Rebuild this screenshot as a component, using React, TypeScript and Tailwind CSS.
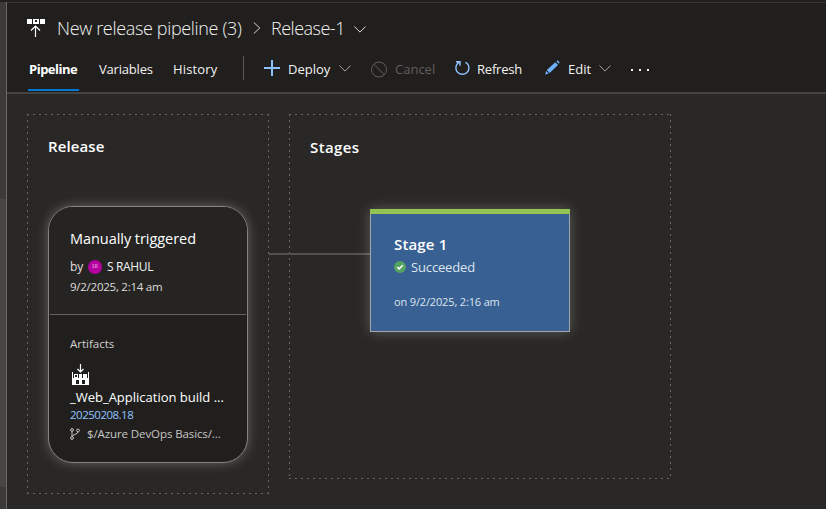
import React from "react";

const dashes =
  "[background:linear-gradient(90deg,#696765_2px,transparent_2px)_0_0/6px_1px_repeat-x,linear-gradient(90deg,#696765_2px,transparent_2px)_0_100%/6px_1px_repeat-x,linear-gradient(#696765_2px,transparent_2px)_0_0/1px_6px_repeat-y,linear-gradient(#696765_2px,transparent_2px)_100%_0/1px_6px_repeat-y]";

function ChevronDown({ className = "" }: { className?: string }) {
  return (
    <svg width="12" height="7" viewBox="0 0 12 7" fill="none" stroke="currentColor" className={`shrink-0 ${className}`}>
      <path d="M.4 .5 6 6.1 11.6 .5" />
    </svg>
  );
}

function ReleaseIcon() {
  return (
    <svg width="18" height="19" viewBox="0 0 18 19" className="shrink-0 text-white" shapeRendering="crispEdges">
      <path fill="currentColor" fillRule="evenodd" d="M0 0h5v5H0zM6 0h6v5H6zM8 1v2h2V1zM13 0h5v5h-5z" />
      <path d="M8.5 18V7M4 11.5 8.5 7 13 11.5" fill="none" stroke="currentColor" shapeRendering="auto" strokeWidth="1.2" />
    </svg>
  );
}

function BuildIcon() {
  return (
    <svg width="17" height="21" viewBox="0 0 17 21" className="shrink-0" shapeRendering="crispEdges">
      <path fill="#fff" fillRule="evenodd" d="M0 8h1v6h15V8h1v13H0zM4 16v4h3v-4zM10 16v4h3v-4z" />
      <path fill="#fff" fillRule="evenodd" d="M2 10h4v4H2zM3 11v2h2v-2zM7 10h3v4H7zM11 10h4v4h-4z" />
      <path d="M8.5 0V8M5.5 5 8.5 8 11.5 5" fill="none" stroke="#fff" strokeWidth="1.2" shapeRendering="auto" />
    </svg>
  );
}

function Header() {
  return (
    <header className="h-[89px] border-b-2 border-[#454341] bg-[#201f1e] box-content">
      <div className="flex h-[50px] items-center pl-5 text-[18px] font-light text-[#f3f2f1]">
        <div className="mt-px"><ReleaseIcon /></div>
        <span className="ml-[12px] w-[187px] whitespace-nowrap tracking-[-0.34px]">New release pipeline (3)</span>
        <svg width="8" height="12" viewBox="0 0 8 12" fill="none" stroke="#d2d0ce" className="ml-[9px]">
          <path d="M.8 .5 6.8 6 .8 11.5" />
        </svg>
        <span className="ml-[10px] w-[75px] whitespace-nowrap tracking-[-0.5px]">Release-1</span>
        <ChevronDown className="ml-[8px] mt-[3px] text-[#e1dfdd]" />
      </div>
      <div className="flex h-[38px] items-start pl-[21px] text-[13px] text-[#f3f2f1]">
        <div className="h-[38px] w-[51px] whitespace-nowrap border-b-2 border-[#0078d4] pl-px pt-[6px] leading-5 font-bold tracking-[-0.5px] text-white">Pipeline</div>
        <span className="ml-5 mt-[6px] w-[54px] whitespace-nowrap leading-5 tracking-[-0.2px]">Variables</span>
        <span className="ml-5 mt-[6px] w-[46px] whitespace-nowrap leading-5 tracking-[0.15px]">History</span>
        <i className="ml-[24px] mt-[3px] h-6 w-px bg-[#5b5957]" />
        <svg width="16" height="16" viewBox="0 0 16 16" className="ml-[20px] mt-[7px]" fill="#8fc3ff">
          <path d="M7 0h2v7h7v2H9v7H7V9H0V7h7z" />
        </svg>
        <span className="ml-2 mt-[6px] w-[43px] whitespace-nowrap leading-5">Deploy</span>
        <ChevronDown className="ml-[8px] mt-[12px] text-[#a5a3a1]" />
        <svg width="17" height="17" viewBox="0 0 17 17" fill="none" stroke="#605e5c" className="ml-[20px] mt-[8px]">
          <circle cx="8" cy="8.5" r="7.5" /><path d="m2.8 3.2 10.5 10.5" />
        </svg>
        <span className="ml-[7px] mt-[6px] w-10 whitespace-nowrap leading-5 text-[#605e5c]">Cancel</span>
        <svg width="15" height="16" viewBox="0 0 15 16" fill="none" stroke="#8fc3ff" strokeWidth="1.4" className="ml-[20px] mt-[8px]">
          <path d="M1 .7h4v4M4.8 1.2C2.4 2.1.9 4.6.9 7c0 3.7 2.9 6.3 6.5 6.3s6.5-2.6 6.5-6.3c0-2.6-1.4-4.6-3.5-5.6" />
        </svg>
        <span className="ml-[7px] mt-[6px] w-[46px] whitespace-nowrap leading-5 tracking-[-0.2px]">Refresh</span>
        <svg width="15" height="15" viewBox="0 0 15 15" fill="#6db3ff" className="ml-[22px] mt-[7px]">
          <path d="M10.3 2.2 13 4.9 4.7 12.9 1.8 10.1zM11.4 1.3 12.5.3 14.7 2.2 13.7 3.7zM1.2 11 3.8 13.5.2 14.6z" />
        </svg>
        <span className="ml-[8px] mt-[6px] w-6 whitespace-nowrap leading-5">Edit</span>
        <ChevronDown className="ml-[7px] mt-[12px] text-[#a5a3a1]" />
        <div className="ml-[20px] mt-[16px] flex gap-[6px]">
          <i className="size-[2px] bg-[#f3f2f1]" /><i className="size-[2px] bg-[#f3f2f1]" /><i className="size-[2px] bg-[#f3f2f1]" />
        </div>
      </div>
    </header>
  );
}

function ReleaseCard() {
  return (
    <article className="ml-[21px] mt-[48px] h-[257px] w-[200px] overflow-hidden whitespace-nowrap rounded-[25px] border border-[#858381] bg-[#201f1e] shadow-[0_0_12px_rgba(255,255,255,0.28)]">
      <div className="h-[107px] bg-[#252423] pl-[21px] pt-[21px]">
        <h3 className="text-[14.5px] leading-[22px] tracking-[-0.05px] text-white">Manually triggered</h3>
        <div className="mt-[8px] flex h-[18px] items-center text-[12px] text-[#e1dfdd]">
          <span className="w-[13px]">by</span>
          <span className="ml-[5px] flex size-[14px] items-center justify-center rounded-full bg-[#b4009e] text-[5px] text-[#f0b5e9]">SR</span>
          <span className="ml-[5px] tracking-[-0.35px] text-[#f3f2f1]">S RAHUL</span>
        </div>
        <p className="mt-[2px] text-[11.5px] leading-[18px] tracking-[-0.25px] text-[#dedcda]">9/2/2025, 2:14 am</p>
      </div>
      <div className="mx-px h-px bg-[#656361]" />
      <div className="pl-[21px] pt-[20px]">
        <p className="text-[11.5px] leading-[18px] text-[#d2d0ce]">Artifacts</p>
        <div className="ml-[2px] mt-[11px]"><BuildIcon /></div>
        <p className="mt-[4px] text-[13px] leading-[17px] text-white">_Web_Application build ...</p>
        <p className="text-[11.5px] leading-[17px] tracking-[-0.5px] text-[#8fc3ff]">20250208.18</p>
        <div className="mt-[2px] flex h-[18px] items-center text-[11.5px] text-[#c8c6c4]">
          <svg width="10" height="12" viewBox="0 0 10 12" fill="none" stroke="currentColor" className="-mt-px">
            <circle cx="2" cy="2" r="1.4" /><circle cx="8" cy="2.5" r="1.4" /><circle cx="2" cy="10" r="1.4" />
            <path d="M2 3.5v5M8 4C8 6.7 2.5 6 2.5 8.5" />
          </svg>
          <span className="ml-[7px] tracking-[-0.1px]">$/Azure DevOps Basics/...</span>
        </div>
      </div>
    </article>
  );
}

function StageCard() {
  return (
    <article className="h-[123px] w-[200px] whitespace-nowrap border border-t-0 border-[#a3a5a5] bg-[#386092] shadow-[0_0_12px_rgba(255,255,255,0.25)]">
      <div className="-mx-px h-[5px] bg-[#92c353]" />
      <div className="pl-[23px] pt-[19px]">
        <h3 className="text-[15px] font-semibold leading-[22px] tracking-[0.15px] text-white">Stage 1</h3>
        <div className="mt-[2px] flex h-[22px] items-center text-[13px] text-[#dce5ef]">
          <svg width="12" height="12" viewBox="0 0 12 12" className="-mt-[3px]">
            <circle cx="6" cy="6" r="6" fill="#55a362" /><path d="m3.2 6.1 1.9 1.8 3.7-3.7" fill="none" stroke="#fff" strokeWidth="1.5" />
          </svg>
          <span className="ml-[5px] tracking-[-0.15px]">Succeeded</span>
        </div>
        <p className="mt-[14px] text-[11px] leading-[18px] tracking-[-0.15px] text-[#dce5ef]">on 9/2/2025, 2:16 am</p>
      </div>
    </article>
  );
}

export default function App() {
  return (
    <div className="flex h-[509px] w-[826px] overflow-hidden bg-[#292827] font-['Open_Sans','Noto_Sans',sans-serif]">
      <aside className="flex w-[7px] shrink-0 flex-col border-t-2 border-t-[#201f1e] bg-[#3b3a38]">
        <div className="h-[197px] border-r border-[#6b6967]" />
        <div className="h-[288px] border-r border-[#6b6967] bg-[#484644]" />
        <div className="flex-1 border-r border-[#6b6967]" />
      </aside>
      <div className="min-w-0 flex-1">
        <div className="h-[2px] bg-[#201f1e]" />
        <div className="h-px bg-[#383634]" />
        <Header />
        <main className="flex items-start pl-5 pt-[20px]">
          <section className={`h-[380px] w-[242px] ${dashes}`}>
            <h2 className="ml-[21px] pt-[20px] text-[15px] font-semibold leading-6 tracking-[0.1px] text-white">Release</h2>
            <ReleaseCard />
          </section>
          <div className="mt-[139px] h-[2px] w-[20px] bg-[#53514f]" />
          <section className={`h-[365px] w-[382px] ${dashes}`}>
            <h2 className="ml-[21px] pt-[21px] text-[15px] font-semibold leading-6 tracking-[0.4px] text-white">Stages</h2>
            <div className="mt-[50px] flex items-start">
              <div className="ml-px mt-[44px] h-[2px] w-20 bg-[#53514f]" />
              <StageCard />
            </div>
          </section>
        </main>
      </div>
    </div>
  );
}
